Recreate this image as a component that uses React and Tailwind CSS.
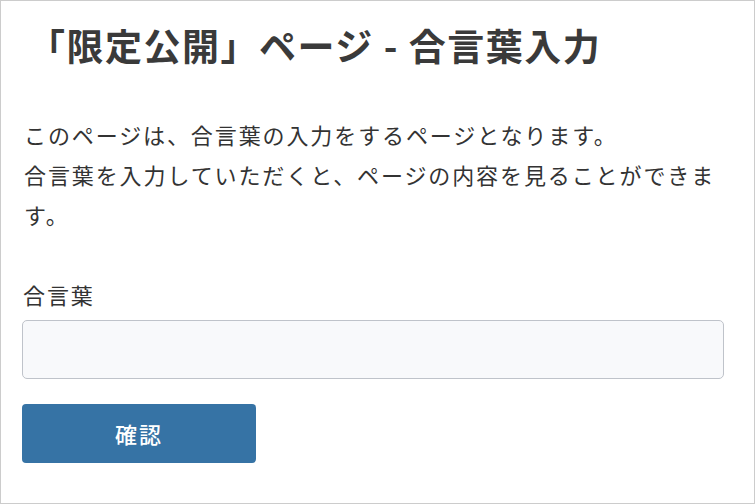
export default function App() {
  return (
    <div
      className="w-[755px] h-[504px] border border-[#cccccc] bg-white text-[#333333] px-[21px] pt-[18px]"
      style={{ fontFamily: '"Noto Sans CJK JP", "Noto Sans", sans-serif' }}
    >
      <h1 className="text-[37px] font-bold tracking-[1.5px] leading-[52px] pl-[6px] text-[#3a3a3a]">
        「限定公開」ページ - 合言葉入力
      </h1>

      <p className="mt-[43px] text-[22px] tracking-[1.9px] leading-[40px] pl-[2px]">
        このページは、合言葉の入力をするページとなります。
        <br />
        合言葉を入力していただくと、ページの内容を見ることができます。
      </p>

      <form className="mt-[40px]" onSubmit={(e) => e.preventDefault()}>
        <label className="block text-[22px] tracking-[1.9px] leading-[40px] pl-[1px]">合言葉</label>
        <input
          type="password"
          className="mt-[6px] block w-[702px] h-[59px] rounded-[5px] border border-[#bfc3ca] bg-[#f8f9fb] px-3 text-[20px] outline-none"
        />
        <button
          type="submit"
          className="mt-[25px] w-[234px] h-[59px] rounded-[4px] bg-[#3673a5] text-white text-[22px] tracking-[1.9px] font-medium"
        >
          確認
        </button>
      </form>
    </div>
  );
}
